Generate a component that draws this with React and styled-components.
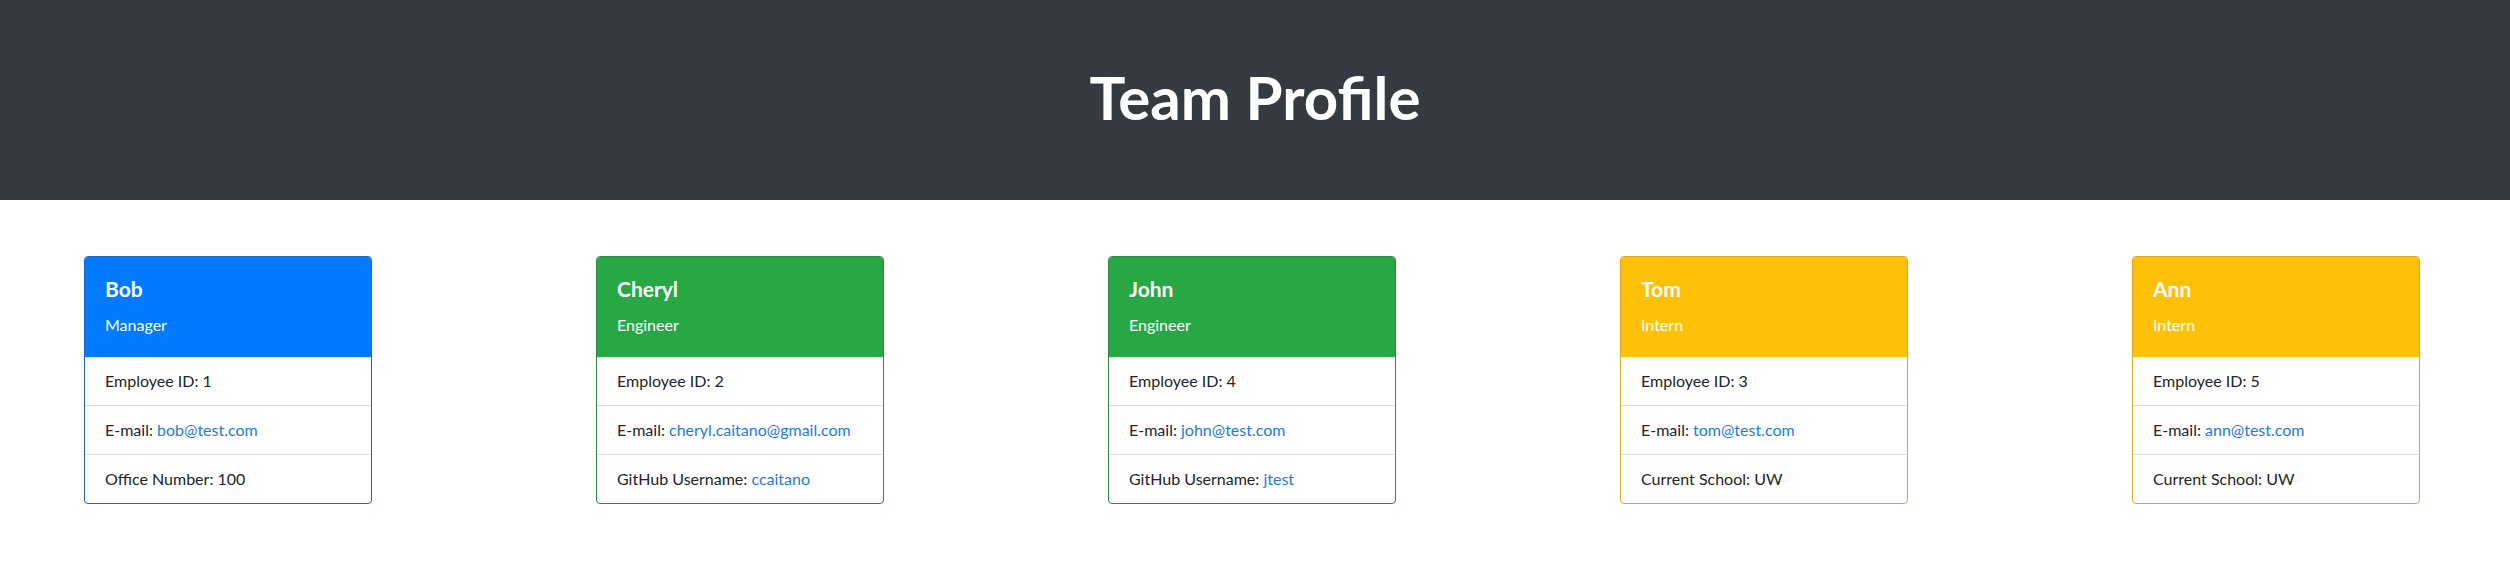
import React from 'react'
import styled, { createGlobalStyle } from 'styled-components'

const GlobalStyle = createGlobalStyle`
    body {
        margin: 0;
        background: #ffffff;
        font-family: Lato, "Open Sans", sans-serif;
        color: #212529;
        font-size: 16px;
        line-height: 1.5;
    }
`;

const colors = {
    primary: { bg: '#007bff', border: '#1f66c1' },
    success: { bg: '#28a745', border: '#2b8a44' },
    warning: { bg: '#ffc107', border: '#d9a921' },
};

const Jumbotron = styled.header`
    height: 200px;
    background: #343a40;
    display: flex;
    align-items: center;
    justify-content: center;
    padding-bottom: 6px;
    box-sizing: border-box;
    h1 {
        margin: 0;
        color: #ffffff;
        font-size: 60px;
        font-weight: 700;
        line-height: 1.2;
    }
`;

const CardRow = styled.main`
    display: flex;
    align-items: flex-start;
    gap: 224px;
    padding: 56px 0 0 84px;
`;

const Card = styled.div`
    width: 288px;
    border: 1px solid ${props => colors[props.tone].border};
    border-radius: 4px;
    overflow: hidden;
    box-sizing: border-box;
`;

const CardHeader = styled.div`
    background: ${props => colors[props.tone].bg};
    color: #ffffff;
    padding: 20px;
    h2 {
        margin: 0 0 12px 0;
        font-size: 21px;
        font-weight: 700;
        line-height: 24px;
    }
    h3 {
        margin: 0;
        font-size: 16px;
        font-weight: 400;
        line-height: 24px;
    }
`;

const ListItem = styled.div`
    padding: 12px 20px;
    line-height: 24px;
    white-space: nowrap;
    border-top: 1px solid rgba(0, 0, 0, 0.125);
    &:first-child {
        border-top: none;
    }
    a {
        color: #1f7ae0;
        text-decoration: none;
    }
`;

const team = [
    { name: 'Bob', role: 'Manager', tone: 'primary', id: 1, email: 'bob@test.com', extra: { label: 'Office Number', value: '100' } },
    { name: 'Cheryl', role: 'Engineer', tone: 'success', id: 2, email: 'cheryl.caitano@gmail.com', extra: { label: 'GitHub Username', value: 'ccaitano', link: true } },
    { name: 'John', role: 'Engineer', tone: 'success', id: 4, email: 'john@test.com', extra: { label: 'GitHub Username', value: 'jtest', link: true } },
    { name: 'Tom', role: 'Intern', tone: 'warning', id: 3, email: 'tom@test.com', extra: { label: 'Current School', value: 'UW' } },
    { name: 'Ann', role: 'Intern', tone: 'warning', id: 5, email: 'ann@test.com', extra: { label: 'Current School', value: 'UW' } },
];

const EmployeeCard = ({ person }) => (
    <Card tone={person.tone}>
        <CardHeader tone={person.tone}>
            <h2>{person.name}</h2>
            <h3>{person.role}</h3>
        </CardHeader>
        <div>
            <ListItem>Employee ID: {person.id}</ListItem>
            <ListItem>E-mail: <a href={`mailto:${person.email}`}>{person.email}</a></ListItem>
            <ListItem>
                {person.extra.label}:{' '}
                {person.extra.link
                    ? <a href={`https://github.com/${person.extra.value}`}>{person.extra.value}</a>
                    : person.extra.value}
            </ListItem>
        </div>
    </Card>
);

const App = () => {
    return (
        <>
            <GlobalStyle />
            <Jumbotron>
                <h1>Team Profile</h1>
            </Jumbotron>
            <CardRow>
                {team.map(person => (
                    <EmployeeCard key={person.id} person={person} />
                ))}
            </CardRow>
        </>
    )
}

export default App;
